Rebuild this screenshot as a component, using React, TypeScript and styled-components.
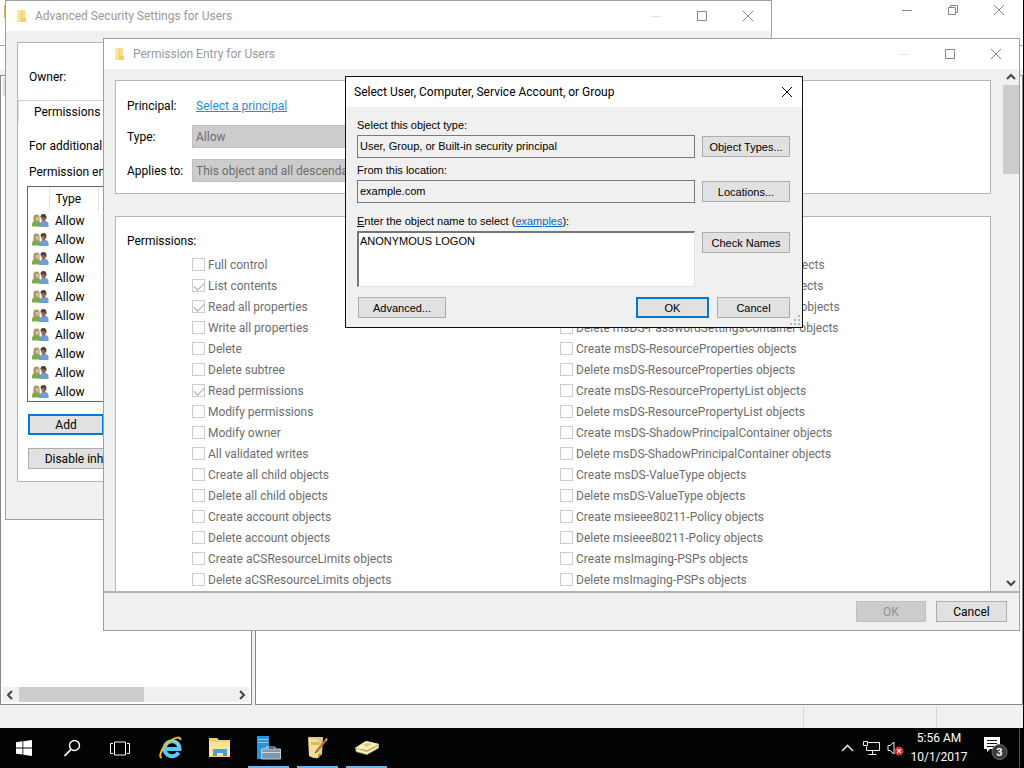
import React from "react";
import styled, { createGlobalStyle, css } from "styled-components";

const uiFont = `Roboto, "Noto Sans", sans-serif`;
const classicFont = `"Liberation Sans", Arial, sans-serif`;

const GlobalStyle = createGlobalStyle`
  * { box-sizing: border-box; }
  body { margin: 0; background: #000; overflow: hidden; }
  button, input, select, textarea { font: inherit; color: inherit; margin: 0; }
`;

const Desktop = styled.div`
  position: relative;
  display: flex;
  flex-direction: column;
  min-height: 100vh;
  font: 12px/16px ${uiFont};
  color: #000;
  overflow: hidden;
`;

/* ---------- windows ---------- */

const Console = styled.main`
  flex: 1;
  display: flex;
  flex-direction: column;
  background: #f0f0f0;
  border-right: 1px solid #000;
`;

const ConsoleTitle = styled.header`
  display: flex;
  justify-content: space-between;
  height: 45px;
  padding: 0 1px 0 4px;
  background: #fff;
`;

const ConsoleTools = styled.div`
  height: 24px;
  border-top: 1px solid #a0a0a0;
  background: #fff;
`;

const Panes = styled.div`
  flex: 1;
  display: grid;
  grid-template-columns: 252px 1fr;
  gap: 3px;
  padding-top: 6px;
`;

const Pane = styled.section`
  display: flex;
  flex-direction: column;
  justify-content: space-between;
  border: 1px solid #828790;
  background: #fff;
`;

const PaneHeader = styled.div`
  height: 18px;
  margin: 2px;
  background: #e0dede;
`;

const StatusBar = styled.footer`
  display: flex;
  justify-content: flex-end;
  height: 23px;
  padding-top: 2px;
`;

const StatusCell = styled.div<{ $width: number }>`
  width: ${(p) => p.$width}px;
  border-left: 1px solid #d4d4d4;
`;

const Window = styled.section<{ $active?: boolean }>`
  position: absolute;
  display: flex;
  flex-direction: column;
  border: 1px solid ${(p) => (p.$active ? "#111" : "#a0a0a0")};
  background: #f0f0f0;
`;

const SecurityWindow = styled(Window)`
  left: 5px;
  top: 0;
  width: 767px;
  height: 520px;
`;

const EntryWindow = styled(Window)`
  left: 103px;
  right: 4px;
  top: 38px;
  height: 593px;
`;

const PickerWindow = styled(Window)`
  left: 345px;
  top: 76px;
  width: 458px;
`;

const TitleBar = styled.header<{ $active?: boolean }>`
  display: flex;
  align-items: center;
  height: 30px;
  flex: none;
  padding-left: ${(p) => (p.$active ? 8 : 9)}px;
  background: #fff;
  color: ${(p) => (p.$active ? "#000" : "#999")};
`;

const Title = styled.h1`
  flex: 1;
  margin: 0;
  font-size: 12px;
  font-weight: 400;
  white-space: nowrap;
  svg + & { margin-left: 5px; }
`;

const CaptionButtons = styled.div`
  display: flex;
`;

const CaptionButton = styled.button<{ $narrow?: boolean; $short?: boolean }>`
  display: grid;
  place-items: center;
  width: ${(p) => (p.$narrow ? 30 : 46)}px;
  height: ${(p) => (p.$short ? 20 : 28)}px;
  padding: 0;
  border: 0;
  background: transparent;
  color: ${(p) => (p.$narrow ? "#000" : "#858585")};
  &:disabled { color: #e2e2e2; }
`;

/* ---------- controls ---------- */

const Button = styled.button<{ $width: number; $primary?: boolean }>`
  flex: none;
  width: ${(p) => p.$width}px;
  height: 21px;
  padding: 0;
  border: ${(p) => (p.$primary ? "2px solid #0078d7" : "1px solid #adadad")};
  background: #e1e1e1;
  line-height: 16px;
  text-align: center;
  white-space: nowrap;
  overflow: hidden;
  &:disabled {
    border-color: #bfbfbf;
    background: #ccc;
    color: #919191;
  }
`;

const Link = styled.a`
  color: #1f8fe8;
  text-decoration: underline;
`;

const ScrollBar = styled.div<{ $horizontal?: boolean }>`
  display: flex;
  flex-direction: ${(p) => (p.$horizontal ? "row" : "column")};
  flex: none;
  background: #f0f0f0;
  ${(p) =>
    p.$horizontal
      ? css`height: 15px; margin: 0 2px 2px;`
      : css`width: 16px;`}
`;

const ScrollArrow = styled.button`
  display: grid;
  place-items: center;
  width: 16px;
  height: 16px;
  padding: 0;
  border: 0;
  background: transparent;
  color: #444;
`;

const ScrollTrack = styled.div<{ $horizontal?: boolean }>`
  flex: 1;
  &::before {
    content: "";
    display: block;
    background: #cdcdcd;
    ${(p) =>
      p.$horizontal
        ? css`width: 125px; height: 15px;`
        : css`height: 89px;`}
  }
`;

/* ---------- advanced security ---------- */

const SecurityPanel = styled.div`
  margin: 11px;
  height: 440px;
  border: 1px solid #b5b5b5;
  background: #fff;
`;

const OwnerRow = styled.div`
  height: 57px;
  padding: 26px 11px 0;
`;

const TabStrip = styled.div`
  border-top: 1px solid #d0d0d0;
`;

const Tab = styled.button`
  display: block;
  width: 96px;
  height: 21px;
  padding: 0 0 0 15px;
  border: 0;
  border-left: 1px solid #d9d9d9;
  background: #fff;
  text-align: left;
`;

const TabPage = styled.div`
  display: flex;
  flex-direction: column;
  align-items: flex-start;
  padding: 16px 9px 0;
`;

const PageText = styled.p`
  margin: 0 2px 10px;
  white-space: nowrap;
`;

const EntryBox = styled.div`
  width: 726px;
  height: 216px;
  margin-top: -4px;
  margin-bottom: 12px;
  border: 1px solid #646464;
`;

const EntryTable = styled.table`
  border-collapse: collapse;
  table-layout: fixed;
  width: 100%;
  th {
    height: 24px;
    padding: 0 0 0 6px;
    border-right: 1px solid #e5e5e5;
    font-weight: 400;
    text-align: left;
  }
  td {
    height: 19px;
    padding: 0 0 0 6px;
    line-height: 16px;
  }
  td:first-child { padding-left: 4px; }
  td svg { display: block; }
`;

const SecurityActions = styled.div`
  display: flex;
  flex-direction: column;
  gap: 13px;
  margin-left: 1px;
`;

/* ---------- permission entry ---------- */

const EntryBody = styled.div`
  flex: 1;
  min-height: 0;
  display: flex;
  border-bottom: 2px solid #b4b4b4;
`;

const EntryContent = styled.div`
  flex: 1;
  padding: 11px 12px 0 11px;
  overflow: hidden;
`;

const Group = styled.section`
  padding: 0 11px;
  border: 1px solid #b5b5b5;
  background: #fff;
  & + & { margin-top: 22px; }
`;

const FieldGroup = styled(Group)`
  height: 114px;
  padding-top: 12px;
`;

const FieldRow = styled.div`
  display: grid;
  grid-template-columns: 65px 1fr;
  align-items: center;
  height: 23px;
  &:first-child { height: 21px; align-items: end; }
  & + & { margin-top: 11px; }
`;

const FieldLink = styled(Link)`
  justify-self: start;
  margin-left: 4px;
`;

const Dropdown = styled.select`
  appearance: none;
  width: 400px;
  height: 23px;
  padding: 0 3px;
  border: 1px solid #bfbfbf;
  border-radius: 0;
  background: #ccc;
  color: #6d6d6d;
  opacity: 1;
`;

const PermissionGroup = styled(Group)`
  height: 420px;
  padding-top: 16px;
`;

const PermissionGrid = styled.div`
  display: grid;
  grid-template-columns: 368px 1fr;
  margin: 5px 0 0 65px;
`;

const PermissionList = styled.ul`
  margin: 0;
  padding: 0;
  list-style: none;
`;

const Permission = styled.label`
  display: flex;
  align-items: center;
  gap: 3px;
  height: 21px;
  color: #6d6d6d;
  white-space: nowrap;
`;

const CheckBox = styled.input`
  appearance: none;
  flex: none;
  width: 13px;
  height: 13px;
  border: 1px solid #ccc;
  background: #fff;
  &:checked::before {
    content: "";
    display: block;
    width: 9px;
    height: 5px;
    margin: 2px 0 0 1px;
    border-left: 1px solid #aaa;
    border-bottom: 1px solid #aaa;
    transform: rotate(-45deg);
  }
`;

const EntryFooter = styled.footer`
  display: flex;
  justify-content: flex-end;
  gap: 10px;
  height: 37px;
  padding: 8px 12px;
`;

/* ---------- object picker ---------- */

const PickerForm = styled.form`
  position: relative;
  padding: 10px 12px 9px 11px;
  font: 11px/16px ${classicFont};
`;

const PickerField = styled.div`
  display: grid;
  grid-template-columns: 1fr 88px;
  column-gap: 7px;
  row-gap: 2px;
  margin-bottom: 4px;
  & > label { grid-column: 1 / -1; }
  & > button { margin-top: 1px; }
`;

const NameField = styled(PickerField)`
  margin: 10px 0;
`;

const FieldLabel = styled.label``;

const ReadOnlyBox = styled.input`
  width: 100%;
  height: 23px;
  padding: 0 2px 2px;
  border: 1px solid #7a7a7a;
  border-radius: 0;
  background: #f0f0f0;
`;

const NameBox = styled.textarea`
  display: block;
  width: 100%;
  height: 56px;
  padding: 0 1px;
  border: 2px solid;
  border-color: #767676 #e3e3e3 #e3e3e3 #767676;
  border-width: 2px 1px 1px 2px;
  border-radius: 0;
  background: #fff;
  resize: none;
`;

const ExampleLink = styled(Link)`
  color: #0066cc;
`;

const PickerActions = styled.div`
  display: flex;
  gap: 8px;
  margin-left: 1px;
  & > :first-child { margin-right: auto; }
`;

const Grip = styled.svg`
  position: absolute;
  right: 1px;
  bottom: 1px;
`;

/* ---------- taskbar ---------- */

const Taskbar = styled.nav`
  display: flex;
  align-items: stretch;
  height: 40px;
  flex: none;
  background: #020305;
  color: #fff;
`;

const TaskButton = styled.button<{ $width: number; $running?: boolean }>`
  display: grid;
  place-items: center;
  width: ${(p) => p.$width}px;
  height: 40px;
  padding: 0;
  border: 0;
  border-bottom: 2px solid ${(p) => (p.$running ? "#6cb4f0" : "transparent")};
  border-top: 2px solid transparent;
  background: transparent;
  color: #fff;
`;

const AppButtons = styled.div`
  display: flex;
  gap: 8px;
  margin-left: 6px;
`;

const Tray = styled.div`
  display: flex;
  margin-left: auto;
  padding-right: 4px;
`;

const Clock = styled.time`
  width: 64px;
  padding-top: 1px;
  line-height: 19px;
  text-align: center;
  white-space: nowrap;
`;

const ActionCenter = styled(TaskButton)`
  margin-left: 1px;
  border-right: 1px solid #555;
`;

/* ---------- drawings ---------- */

const CloseIcon = () => (
  <svg width="12" height="12" viewBox="0 0 12 12" stroke="currentColor" fill="none">
    <path d="M1 1l10 10M11 1L1 11" />
  </svg>
);
const MinIcon = () => (
  <svg width="12" height="12" viewBox="0 0 12 12" stroke="currentColor" fill="none">
    <path d="M1 6.5h10" />
  </svg>
);
const MaxIcon = () => (
  <svg width="12" height="12" viewBox="0 0 12 12" stroke="currentColor" fill="none">
    <path d="M1.5 1.5h9v9h-9z" />
  </svg>
);
const RestoreIcon = () => (
  <svg width="12" height="12" viewBox="0 0 12 12" stroke="currentColor" fill="none">
    <path d="M1.5 3.5h7v7h-7zM3.5 3.5v-2h7v7h-2" />
  </svg>
);

const FolderIcon = () => (
  <svg width="15" height="14" viewBox="0 0 15 14">
    <path d="M2 1h8v8l1 1v3H2z" fill="#f8dc8a" />
    <path d="M2 1l4 1v11l-4-2z" fill="#fbe7a8" />
    <path d="M6 9h5v4H6z" fill="#f3cc62" />
    <path d="M6 2v11" stroke="#efc968" />
  </svg>
);

const PeopleIcon = () => (
  <svg width="17" height="14" viewBox="0 0 17 14">
    <path d="M7 13v-3l3-3h3q3 0 3.5 3v3z" fill="#6f9fd6" />
    <path d="M9 3q0-2.5 2.5-2.5T14 3.5q0 4-2.3 4T9 3z" fill="#9a6a4a" />
    <path d="M8.5 3q0-3 3-3T14.5 4l-.5 1.5-1.5-2.5-4 .5z" fill="#4a403c" />
    <path d="M0 12.5v-2q0-3 3-3h3q2.5 0 2.5 3v2z" fill="#79ab4c" />
    <path d="M1.5 8V3.5q0-3 3-3t3 3V8z" fill="#a8986a" />
    <path d="M4 3h2.5v2.5q0 1.5-1 1.5T4 5z" fill="#e6c39c" />
  </svg>
);

const arrowPaths = {
  up: "M2 7l4-4 4 4",
  down: "M2 3l4 4 4-4",
  left: "M7 1L3 5l4 4",
  right: "M5 1l4 4-4 4",
};
const ArrowIcon = ({ to }: { to: keyof typeof arrowPaths }) => (
  <svg width="12" height="10" viewBox="0 0 12 10" fill="none" stroke="currentColor" strokeWidth="2">
    <path d={arrowPaths[to]} />
  </svg>
);

const StartIcon = () => (
  <svg width="16" height="16" viewBox="0 0 16 16" fill="#fff">
    <path d="M0 2.2l6.5-.9v6.2H0zM7.3 1.2L16 0v7.5H7.3zM0 8.4h6.5v6.2L0 13.7zM7.3 8.4H16V16l-8.7-1.2z" />
  </svg>
);
const SearchIcon = () => (
  <svg width="18" height="18" viewBox="0 0 18 18" fill="none" stroke="#fff">
    <circle cx="11.5" cy="6.5" r="5" strokeWidth="1.4" />
    <path d="M8 10.3L1.5 17" strokeWidth="1.7" />
  </svg>
);
const TaskViewIcon = () => (
  <svg width="20" height="15" viewBox="0 0 20 15" fill="none" stroke="#fff">
    <path d="M4.5 1h11v13h-11zM3 2.5H.5v10H3M17 2.5h2.5v10H17" />
  </svg>
);
const BrowserIcon = () => (
  <svg width="24" height="24" viewBox="0 0 24 24" fill="none">
    <path d="M19.5 16.5a7.5 7.5 0 1 1 1-3.5H7" stroke="#5cc8f5" strokeWidth="4" />
    <path d="M6 10.5q2-6 7-6t6 5" stroke="#a5e6ff" />
    <path d="M2.5 22C-1 20 4 9 12 4.5 17 1 21.5.5 21.5 4" stroke="#f4bd2a" strokeWidth="2" />
  </svg>
);
const ExplorerIcon = () => (
  <svg width="22" height="20" viewBox="0 0 22 20">
    <path d="M0 0h8l2 2h11v17H0z" fill="#f2ce6c" />
    <path d="M0 4h21v14H0z" fill="#fce49a" />
    <path d="M4 18v-6q0-1 1-1h12q1 0 1 1v6h-4v-3H8v3z" fill="#3fa3dc" />
  </svg>
);
const ServerIcon = () => (
  <svg width="24" height="24" viewBox="0 0 24 24">
    <path d="M0 0h12v23H0z" fill="#2b93da" />
    <path d="M1 3.5h10M1 6.5h10" stroke="#8fd0f8" />
    <path d="M9 13v-2h9v2" fill="none" stroke="#c5d5e2" />
    <path d="M4.5 13h19v10h-19z" fill="#8097ab" stroke="#bccbd7" />
    <path d="M5 16.5h19" stroke="#c9d6e0" />
  </svg>
);
const NotesIcon = () => (
  <svg width="22" height="24" viewBox="0 0 22 24">
    <path d="M1 2q1-2 3-1h12l-1 17-4 4q-4 1-9-2z" fill="#e4cb80" />
    <path d="M2 2l10 2-1 18-9-2z" fill="#f0dea0" />
    <path d="M4 6h8v3H4z" fill="#d5b965" />
    <path d="M15 18l-4 0v4z" fill="#bb983f" />
    <path d="M9 16L19 4" stroke="#b8713e" strokeWidth="2" />
    <path d="M18.5 4.5l1.500-2" stroke="#eaa39a" strokeWidth="2" />
    <path d="M8 17l1.500-1.500" stroke="#333" />
  </svg>
);
const BookIcon = () => (
  <svg width="24" height="16" viewBox="0 0 24 16">
    <path d="M0 8L11 1l13 3v4l-12 7L1 12z" fill="#c5ae5f" />
    <path d="M0 8L11 1l13 3-12 6z" fill="#f7efb8" />
    <path d="M2 9l10 3L23 6v2l-11 6L1 11z" fill="#f4eed2" />
    <path d="M8 5l4-2 5 1-5 3z" fill="#dccb7c" />
  </svg>
);
const TrayChevron = () => (
  <svg width="13" height="8" viewBox="0 0 13 8" fill="none" stroke="#ddd" strokeWidth="1.6">
    <path d="M1 7l5.5-5.5L12 7" />
  </svg>
);
const NetworkIcon = () => (
  <svg width="17" height="14" viewBox="0 0 17 14" fill="none" stroke="#eee">
    <path d="M5 1.5h11.5v8H3.5v-4M.5.5h4v4h-4zM9.5 10v3M5.5 13.5h8" />
  </svg>
);
const SoundIcon = () => (
  <svg width="17" height="15" viewBox="0 0 17 15" fill="none">
    <path d="M1 4.5h2l4-3.5v12l-4-3.5H1z" stroke="#eee" />
    <circle cx="12" cy="10" r="4.5" fill="#e3262e" />
    <path d="M10.2 8.2l3.6 3.6M13.8 8.2l-3.6 3.6" stroke="#fff" strokeWidth="1.2" />
  </svg>
);
const ActionIcon = () => (
  <svg width="25" height="25" viewBox="0 0 25 25">
    <path d="M1 1h16v12H7l-3 3v-3H1z" fill="#fff" />
    <path d="M4 4.5h10M4 7.5h10M4 10.5h7" stroke="#111" />
    <circle cx="16.5" cy="16" r="7.5" fill="#3c3c3c" stroke="#6c6c6c" />
    <text x="16.5" y="20" fill="#fff" fontSize="11" fontWeight="700" textAnchor="middle">3</text>
  </svg>
);

/* ---------- data ---------- */

const leftPermissions: [string, boolean][] = [
  ["Full control", false],
  ["List contents", true],
  ["Read all properties", true],
  ["Write all properties", false],
  ["Delete", false],
  ["Delete subtree", false],
  ["Read permissions", true],
  ["Modify permissions", false],
  ["Modify owner", false],
  ["All validated writes", false],
  ["Create all child objects", false],
  ["Delete all child objects", false],
  ["Create account objects", false],
  ["Delete account objects", false],
  ["Create aCSResourceLimits objects", false],
  ["Delete aCSResourceLimits objects", false],
];

const rightPermissions: [string, boolean][] = [
  "msDS-ManagedServiceAccount",
  "msDS-PasswordSettingsContainer",
  "msDS-ResourceProperties",
  "msDS-ResourcePropertyList",
  "msDS-ShadowPrincipalContainer",
  "msDS-ValueType",
  "msieee80211-Policy",
  "msImaging-PSPs",
].flatMap((name): [string, boolean][] => [
  [`Create ${name} objects`, false],
  [`Delete ${name} objects`, false],
]);

const Permissions = ({ items }: { items: [string, boolean][] }) => (
  <PermissionList>
    {items.map(([name, on]) => (
      <li key={name}>
        <Permission>
          <CheckBox type="checkbox" defaultChecked={on} disabled />
          {name}
        </Permission>
      </li>
    ))}
  </PermissionList>
);

export default function App() {
  return (
    <Desktop>
      <GlobalStyle />
      <Console>
        <ConsoleTitle>
          <svg width="16" height="22" viewBox="0 0 16 22">
            <path d="M0 5h16v13H0z" fill="#d9b65c" />
          </svg>
          <CaptionButtons>
            <CaptionButton $short aria-label="Minimize"><MinIcon /></CaptionButton>
            <CaptionButton $short aria-label="Restore"><RestoreIcon /></CaptionButton>
            <CaptionButton $short aria-label="Close"><CloseIcon /></CaptionButton>
          </CaptionButtons>
        </ConsoleTitle>
        <ConsoleTools />
        <Panes>
          <Pane>
            <PaneHeader />
            <ScrollBar $horizontal>
              <ScrollArrow aria-label="Scroll left"><ArrowIcon to="left" /></ScrollArrow>
              <ScrollTrack $horizontal />
              <ScrollArrow aria-label="Scroll right"><ArrowIcon to="right" /></ScrollArrow>
            </ScrollBar>
          </Pane>
          <Pane />
        </Panes>
        <StatusBar>
          <StatusCell $width={133} />
          <StatusCell $width={87} />
        </StatusBar>
      </Console>

      <SecurityWindow>
        <TitleBar>
          <FolderIcon />
          <Title>Advanced Security Settings for Users</Title>
          <CaptionButtons>
            <CaptionButton disabled aria-label="Minimize"><MinIcon /></CaptionButton>
            <CaptionButton aria-label="Maximize"><MaxIcon /></CaptionButton>
            <CaptionButton aria-label="Close"><CloseIcon /></CaptionButton>
          </CaptionButtons>
        </TitleBar>
        <SecurityPanel>
          <OwnerRow>Owner:</OwnerRow>
          <TabStrip><Tab>Permissions</Tab></TabStrip>
          <TabPage>
            <PageText>For additional information</PageText>
            <PageText>Permission entries:</PageText>
            <EntryBox>
              <EntryTable>
                <colgroup>
                  <col style={{ width: 21 }} />
                  <col style={{ width: 49 }} />
                  <col />
                </colgroup>
                <thead>
                  <tr><th /><th>Type</th><th /></tr>
                </thead>
                <tbody>
                  {Array.from({ length: 10 }, (_, i) => (
                    <tr key={i}><td><PeopleIcon /></td><td>Allow</td><td /></tr>
                  ))}
                </tbody>
              </EntryTable>
            </EntryBox>
            <SecurityActions>
              <Button $width={76} $primary>Add</Button>
              <Button $width={135}>Disable inheritance</Button>
            </SecurityActions>
          </TabPage>
        </SecurityPanel>
      </SecurityWindow>

      <EntryWindow>
        <TitleBar>
          <FolderIcon />
          <Title>Permission Entry for Users</Title>
          <CaptionButtons>
            <CaptionButton disabled aria-label="Minimize"><MinIcon /></CaptionButton>
            <CaptionButton aria-label="Maximize"><MaxIcon /></CaptionButton>
            <CaptionButton aria-label="Close"><CloseIcon /></CaptionButton>
          </CaptionButtons>
        </TitleBar>
        <EntryBody>
          <EntryContent>
            <FieldGroup>
              <FieldRow>
                <span>Principal:</span>
                <FieldLink href="#principal">Select a principal</FieldLink>
              </FieldRow>
              <FieldRow>
                <label htmlFor="type">Type:</label>
                <Dropdown id="type" disabled><option>Allow</option></Dropdown>
              </FieldRow>
              <FieldRow>
                <label htmlFor="applies">Applies to:</label>
                <Dropdown id="applies" disabled>
                  <option>This object and all descendant objects</option>
                </Dropdown>
              </FieldRow>
            </FieldGroup>
            <PermissionGroup>
              Permissions:
              <PermissionGrid>
                <Permissions items={leftPermissions} />
                <Permissions items={rightPermissions} />
              </PermissionGrid>
            </PermissionGroup>
          </EntryContent>
          <ScrollBar>
            <ScrollArrow aria-label="Scroll up"><ArrowIcon to="up" /></ScrollArrow>
            <ScrollTrack />
            <ScrollArrow aria-label="Scroll down"><ArrowIcon to="down" /></ScrollArrow>
          </ScrollBar>
        </EntryBody>
        <EntryFooter>
          <Button $width={70} disabled>OK</Button>
          <Button $width={71}>Cancel</Button>
        </EntryFooter>
      </EntryWindow>

      <PickerWindow $active role="dialog" aria-labelledby="picker-title">
        <TitleBar $active>
          <Title id="picker-title">Select User, Computer, Service Account, or Group</Title>
          <CaptionButton $narrow aria-label="Close"><CloseIcon /></CaptionButton>
        </TitleBar>
        <PickerForm onSubmit={(e) => e.preventDefault()}>
          <PickerField>
            <FieldLabel htmlFor="object-type">Select this object type:</FieldLabel>
            <ReadOnlyBox id="object-type" readOnly value="User, Group, or Built-in security principal" />
            <Button type="button" $width={88}>Object Types...</Button>
          </PickerField>
          <PickerField>
            <FieldLabel htmlFor="location">From this location:</FieldLabel>
            <ReadOnlyBox id="location" readOnly value="example.com" />
            <Button type="button" $width={88}>Locations...</Button>
          </PickerField>
          <NameField>
            <FieldLabel htmlFor="object-name">
              <u>E</u>nter the object name to select (<ExampleLink href="#examples">examples</ExampleLink>):
            </FieldLabel>
            <NameBox id="object-name" defaultValue="ANONYMOUS LOGON" />
            <Button type="button" $width={88}>Check Names</Button>
          </NameField>
          <PickerActions>
            <Button type="button" $width={88}>Advanced...</Button>
            <Button $width={73} $primary>OK</Button>
            <Button type="button" $width={73}>Cancel</Button>
          </PickerActions>
          <Grip width="11" height="11" viewBox="0 0 11 11" fill="#b8b8b8">
            <path d="M8 0h2v2H8zM8 4h2v2H8zM8 8h2v2H8zM4 4h2v2H4zM4 8h2v2H4zM0 8h2v2H0z" />
          </Grip>
        </PickerForm>
      </PickerWindow>

      <Taskbar>
        <TaskButton $width={48} aria-label="Start"><StartIcon /></TaskButton>
        <TaskButton $width={48} aria-label="Search"><SearchIcon /></TaskButton>
        <TaskButton $width={48} aria-label="Task view"><TaskViewIcon /></TaskButton>
        <AppButtons>
          <TaskButton $width={41} aria-label="Browser"><BrowserIcon /></TaskButton>
          <TaskButton $width={41} aria-label="File Explorer"><ExplorerIcon /></TaskButton>
          <TaskButton $width={41} $running aria-label="Server Manager"><ServerIcon /></TaskButton>
          <TaskButton $width={41} $running aria-label="Notes"><NotesIcon /></TaskButton>
          <TaskButton $width={41} $running aria-label="Directory"><BookIcon /></TaskButton>
        </AppButtons>
        <Tray>
          <TaskButton $width={24} aria-label="Show hidden icons"><TrayChevron /></TaskButton>
          <TaskButton $width={24} aria-label="Network"><NetworkIcon /></TaskButton>
          <TaskButton $width={24} aria-label="Volume"><SoundIcon /></TaskButton>
          <Clock>5:56 AM<br />10/1/2017</Clock>
          <ActionCenter $width={48} aria-label="Notifications"><ActionIcon /></ActionCenter>
        </Tray>
      </Taskbar>
    </Desktop>
  );
}
